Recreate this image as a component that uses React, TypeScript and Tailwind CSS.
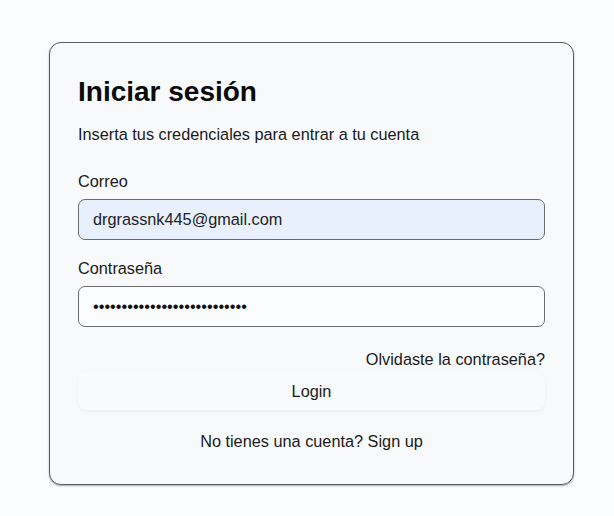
import { useState } from 'react'

export default function App() {
  const [email, setEmail] = useState('drgrassnk445@gmail.com')
  const [password, setPassword] = useState('ABCDEFGHIJKLMNOPQRSTUVWXYZa')

  return (
    <div className="min-h-screen bg-[#fbfcfd] pt-[42px] font-['Liberation_Sans',Arial,sans-serif] text-[#111]">
      <div className="ml-[49px] w-[525px] rounded-[12px] border border-[#5a5a5a] bg-[#f8f9fb] px-[28px] pt-[32px] pb-[33px] shadow-[0_1px_2px_rgba(0,0,0,0.35)]">
        <h1 className="text-[28px] font-bold leading-[34px] text-[#0b0b0b]">Iniciar sesión</h1>
        <p className="mt-[15px] text-[16.3px] leading-[20px] text-[#1a1a1a]">
          Inserta tus credenciales para entrar a tu cuenta
        </p>

        <label className="mt-[27px] block text-[16.3px] leading-[20px] text-[#1a1a1a]">Correo</label>
        <input
          type="email"
          value={email}
          onChange={(e) => setEmail(e.target.value)}
          className="mt-[8px] block h-[41px] w-full rounded-[7px] border border-[#6b6b6b] bg-[#e8f0fe] px-[14px] text-[16.3px] text-[#222] outline-none"
        />

        <label className="mt-[18px] block text-[16.3px] leading-[20px] text-[#1a1a1a]">Contraseña</label>
        <input
          type="password"
          value={password}
          onChange={(e) => setPassword(e.target.value)}
          className="mt-[8px] block h-[41px] w-full rounded-[7px] border border-[#6b6b6b] bg-[#fbfcfd] px-[14px] text-[16.3px] text-[#111] outline-none"
        />

        <div className="mt-[22px] flex justify-end">
          <a href="#" className="text-[16.3px] leading-[20px] text-[#1a1a1a]">
            Olvidaste la contraseña?
          </a>
        </div>

        <button
          type="button"
          className="mt-[3px] flex h-[38px] w-full items-center justify-center rounded-[8px] bg-[#f9fafc] text-[16.3px] text-[#1a1a1a] shadow-[0_1px_3px_rgba(0,0,0,0.06)]"
        >
          Login
        </button>

        <p className="mt-[21px] text-center text-[16.3px] leading-[20px] text-[#1a1a1a]">
          No tienes una cuenta? <a href="#">Sign up</a>
        </p>
      </div>
    </div>
  )
}
